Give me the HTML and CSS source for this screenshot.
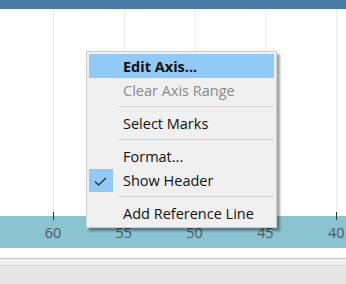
FILE: index.html
```html
<!DOCTYPE html>
<html>
<head>
<meta charset="utf-8">
<link rel="stylesheet" href="styles.css">
</head>
<body>
<div class="topbar"></div>
<div class="plot"></div>
<div class="axis">
  <div class="tick">60</div>
  <div class="tick">55</div>
  <div class="tick">50</div>
  <div class="tick">45</div>
  <div class="tick">40</div>
</div>
<div class="gap"></div>
<div class="toolbar"></div>
<div class="footer"></div>

<div class="menu">
  <div class="item active"><span class="icon"></span><span class="label bold">Edit Axis...</span></div>
  <div class="item disabled"><span class="icon"></span><span class="label">Clear Axis Range</span></div>
  <div class="sep"></div>
  <div class="item"><span class="icon"></span><span class="label">Select Marks</span></div>
  <div class="sep"></div>
  <div class="item"><span class="icon"></span><span class="label">Format...</span></div>
  <div class="item"><span class="icon checked"><svg width="24" height="23" viewBox="0 0 24 23"><polyline points="6,12.5 9.5,16 17,9" fill="none" stroke="#3a3a3a" stroke-width="1.6"/></svg></span><span class="label">Show Header</span></div>
  <div class="sep"></div>
  <div class="item"><span class="icon"></span><span class="label">Add Reference Line</span></div>
</div>
</body>
</html>
```
FILE: styles.css
```css
html, body {
  margin: 0;
  padding: 0;
}
body {
  width: 346px;
  height: 284px;
  overflow: hidden;
  position: relative;
  display: flex;
  flex-direction: column;
  background: #ffffff;
  font-family: "Open Sans", "Noto Sans", sans-serif;
}
.topbar {
  height: 9px;
  flex: none;
  background: #4d79a6;
}
.plot {
  height: 207px;
  flex: none;
  background-color: #ffffff;
  background-image: linear-gradient(to right, #ebebeb 1px, transparent 1px);
  background-size: 70.8px 100%;
  background-position: 53px 0;
}
.axis {
  height: 32px;
  flex: none;
  display: flex;
  overflow-x: clip;
  overflow-y: visible;
  padding-left: 17.6px;
  background: #8bc3d1;
}
.tick {
  flex: none;
  width: 70.8px;
  position: relative;
  text-align: center;
  font-size: 14.5px;
  line-height: 20px;
  padding-top: 7px;
  color: #4f5b63;
}
.tick::before {
  content: "";
  position: absolute;
  left: 35.4px;
  top: -4px;
  width: 1px;
  height: 8px;
  background: #333333;
}
.gap {
  height: 10px;
  flex: none;
}
.toolbar {
  height: 6px;
  flex: none;
  background: #f0f0f0;
  border-top: 1px solid #c4c4c4;
  border-bottom: 1px solid #d6d6d6;
}
.footer {
  flex: 1;
  background: #e6e6e6;
}

.menu {
  position: absolute;
  left: 86px;
  top: 51px;
  width: 185px;
  padding: 2px;
  background: #f0f0f0;
  border: 1px solid #cccccc;
  box-shadow: 3px 3px 2px rgba(0, 0, 0, 0.35);
}
.item {
  height: 24px;
  display: flex;
  align-items: center;
  font-size: 14.5px;
  color: #111111;
}
.item.active {
  background: #91c9f7;
}
.item.disabled {
  color: #8a8a8a;
}
.icon {
  width: 24px;
  height: 23px;
  flex: none;
  margin-right: 10px;
}
.icon.checked {
  background: #91c9f7;
}
.icon svg {
  display: block;
}
.label.bold {
  font-weight: 700;
}
.sep {
  height: 9px;
  margin-left: 30px;
  position: relative;
}
.sep::after {
  content: "";
  position: absolute;
  left: 0;
  right: 0;
  top: 4px;
  height: 1px;
  background: #d7d7d7;
}
```
